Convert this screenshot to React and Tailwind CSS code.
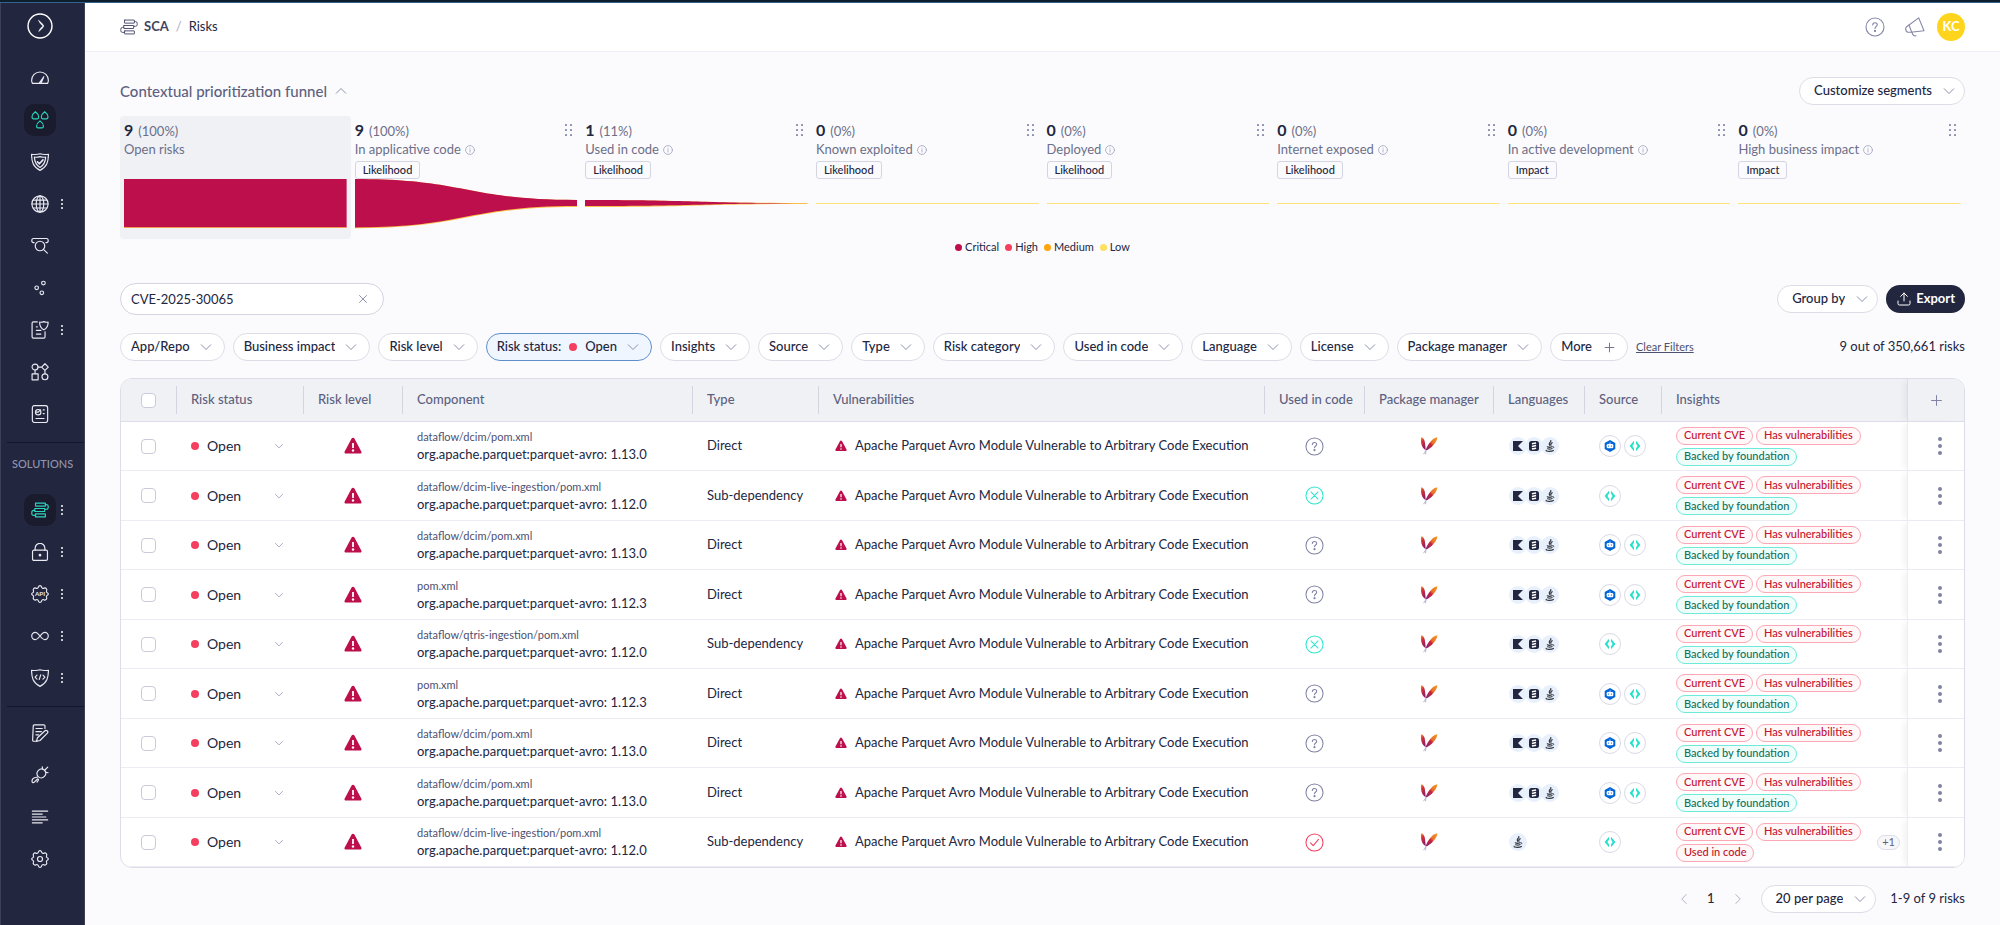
import { useState } from 'react';
import { ChevronLeft, ChevronRight, Plus, X, Upload } from 'lucide-react';

const SEGMENTS = [
  { count: 9, percent: '100%', label: 'Open risks', active: true },
  { count: 9, percent: '100%', label: 'In applicative code', tag: 'Likelihood' },
  { count: 1, percent: '11%', label: 'Used in code', tag: 'Likelihood' },
  { count: 0, percent: '0%', label: 'Known exploited', tag: 'Likelihood' },
  { count: 0, percent: '0%', label: 'Deployed', tag: 'Likelihood' },
  { count: 0, percent: '0%', label: 'Internet exposed', tag: 'Likelihood' },
  { count: 0, percent: '0%', label: 'In active development', tag: 'Impact' },
  { count: 0, percent: '0%', label: 'High business impact', tag: 'Impact' },
];

const LEGEND = [
  { label: 'Critical', color: 'bg-[#bc0f4b]' },
  { label: 'High', color: 'bg-[#f43f5e]' },
  { label: 'Medium', color: 'bg-[#fda50f]' },
  { label: 'Low', color: 'bg-[#fde05e]' },
];

const FILTERS_BEFORE = ['App/Repo', 'Business impact', 'Risk level'];
const FILTERS_AFTER = [
  'Insights',
  'Source',
  'Type',
  'Risk category',
  'Used in code',
  'Language',
  'License',
  'Package manager',
];

const COLUMNS = [
  { label: 'Risk status', width: 'w-[127px]' },
  { label: 'Risk level', width: 'w-[99px]' },
  { label: 'Component', width: 'w-[290px]' },
  { label: 'Type', width: 'w-[126px]' },
  { label: 'Vulnerabilities', width: 'w-[446px]' },
  { label: 'Used in code', width: 'w-[100px]' },
  { label: 'Package manager', width: 'w-[129px]' },
  { label: 'Languages', width: 'w-[91px]' },
  { label: 'Source', width: 'w-[77px]' },
  { label: 'Insights', width: '' },
];

const VULNERABILITY = 'Apache Parquet Avro Module Vulnerable to Arbitrary Code Execution';
const BASE_INSIGHTS = ['Current CVE', 'Has vulnerabilities', 'Backed by foundation'];

const direct = (path, version) => ({
  path,
  version,
  type: 'Direct',
  used: 'unknown',
  languages: ['kotlin', 'scala', 'java'],
  sources: ['bot', 'code'],
  insights: BASE_INSIGHTS,
});

const subDependency = (path, version) => ({
  ...direct(path, version),
  type: 'Sub-dependency',
  used: 'no',
  sources: ['code'],
});

const RISKS = [
  direct('dataflow/dcim/pom.xml', '1.13.0'),
  subDependency('dataflow/dcim-live-ingestion/pom.xml', '1.12.0'),
  direct('dataflow/dcim/pom.xml', '1.13.0'),
  direct('pom.xml', '1.12.3'),
  subDependency('dataflow/qtris-ingestion/pom.xml', '1.12.0'),
  direct('pom.xml', '1.12.3'),
  direct('dataflow/dcim/pom.xml', '1.13.0'),
  direct('dataflow/dcim/pom.xml', '1.13.0'),
  {
    ...subDependency('dataflow/dcim-live-ingestion/pom.xml', '1.12.0'),
    used: 'yes',
    languages: ['java'],
    insights: ['Current CVE', 'Has vulnerabilities', 'Used in code'],
    more: 1,
  },
];

function Icon({ size = 20, className = '', strokeWidth = 1.2, children }) {
  return (
    <svg
      width={size}
      height={size}
      viewBox="0 0 20 20"
      fill="none"
      stroke="currentColor"
      strokeWidth={strokeWidth}
      strokeLinecap="round"
      strokeLinejoin="round"
      className={`shrink-0 ${className}`}
      aria-hidden="true"
    >
      {children}
    </svg>
  );
}

const Chevron = ({ className = '' }) => (
  <svg width="12" height="8" viewBox="0 0 12 8" fill="none" stroke="currentColor" className={`shrink-0 ${className}`} aria-hidden="true">
    <path d="M1 1.5l5 5 5-5" />
  </svg>
);

const StackShape = () => (
  <>
    <rect x="5" y="2.300" width="11" height="3.400" rx=".3" />
    <rect x="4.200" y="8.300" width="11" height="3.400" rx=".3" />
    <rect x="5" y="14.300" width="11" height="3.400" rx=".3" />
    <path d="M16 4h1.200a1.900 1.900 0 011.900 2v1.200a1.900 1.900 0 01-1.900 2h-2M4.200 10.500H2.800a1.900 1.900 0 00-1.900 2v1.500a1.900 1.900 0 001.900 2H5" />
  </>
);

const GaugeShape = () => (
  <path d="M1.6 16c-.6-1-.9-2.200-.9-3.400a9.300 9.300 0 0118.600 0c0 1.200-.3 2.400-.9 3.400zM9.200 15.600l5-7M9.200 15.600a1.500 1.500 0 002 0l3-7" />
);

const DropsShape = () => (
  <>
    <path d="M4.800 .8c2 1.500 3.700 3.700 3.700 5.700 0 1.200-.6 2.200-1.400 2.200H2.500c-.8 0-1.400-1-1.400-2.200 0-2 1.700-4.200 3.700-5.700z" />
    <path d="M15.200 .8c2 1.500 3.700 3.700 3.700 5.700 0 1.200-.6 2.200-1.400 2.200h-4.600c-.8 0-1.400-1-1.400-2.200 0-2 1.700-4.200 3.700-5.700z" />
    <path d="M10 11c2 1.500 3.800 3.600 3.800 5.600 0 1.200-.6 2.200-1.400 2.200H7.600c-.8 0-1.400-1-1.400-2.200 0-2 1.800-4.100 3.800-5.600z" />
  </>
);

const ShieldCheckShape = () => (
  <>
    <path d="M10 .8c3 1.200 6 1 9.400.6-.1 8.300-1.500 13.600-9.400 17.900C2.100 15 .7 9.700.6 1.400 4 1.800 7 2 10 .8z" />
    <path d="M10 4c2.300.7 4.200.8 6.300.6-.3 5.200-1.600 8.600-6.300 11.500C5.300 13.200 4 9.800 3.700 4.600c2.100.2 4 .1 6.300-.6z" />
    <path d="M7.200 9.800l2.100 2.200 4-4.400" strokeWidth="1.800" />
  </>
);

const GlobeShape = () => (
  <>
    <circle cx="10" cy="10" r="9" />
    <ellipse cx="10" cy="10" rx="4.200" ry="9" />
    <path d="M10 1v18M1 10h18M2.300 5.600h15.400M2.300 14.400h15.400" />
  </>
);

const InspectShape = () => (
  <>
    <path d="M3.500 6.200H2.600a1.800 1.800 0 01-1.700-2.200c0-1.500.8-2.300 1.900-2.300h14.400c1.100 0 1.900.8 1.900 2.300a1.800 1.800 0 01-1.700 2.200h-.9" />
    <circle cx="10" cy="10" r="5.300" />
    <path d="M13.800 13.800l4.400 4.200" />
  </>
);

const DotsShape = () => (
  <>
    <circle cx="13.800" cy="4.500" r="2" />
    <circle cx="6.300" cy="9.800" r="2" />
    <circle cx="12" cy="15.300" r="2" />
  </>
);

const PolicyShape = () => (
  <>
    <path d="M7 1H2.600C1.700 1 1.200 1.500 1.200 2.400v15.200c0 .9.500 1.400 1.400 1.400h11.600c.9 0 1.400-.5 1.400-1.400V12" />
    <path d="M14.300.7c1.700.7 3 .8 4.700.6.100 4-1 6.600-4.700 8.500-3.700-1.900-4.800-4.500-4.700-8.500 1.700.2 3 .1 4.700-.6z" />
    <path d="M6 6.500h1M6 10.500h5M6 14.500h5" />
  </>
);

const ShapesShape = () => (
  <>
    <circle cx="4.500" cy="4.500" r="3.300" />
    <path d="M15.500.8l3.700 3.700-3.700 3.700-3.700-3.700zM7.800 4.500h4M4.500 7.800v4M15.500 8.200v3.500" />
    <rect x="1.200" y="12" width="6.700" height="6.700" />
    <circle cx="15.500" cy="15.300" r="3.300" />
  </>
);

const ReportShape = () => (
  <>
    <rect x="1.500" y=".6" width="17" height="18.800" rx="2.500" />
    <circle cx="8" cy="8" r="3" />
    <path d="M8 8l2.500-2.500M8 8H5M13.500 5.500h1.200M13.500 9.500h1.200M5.500 15h9" />
  </>
);

const LockShape = () => (
  <>
    <rect x="1.700" y="8" width="16.600" height="11.300" rx="1.500" />
    <path d="M4.600 8V5.800a5.400 5.400 0 0110.800 0V8" />
    <circle cx="10" cy="13.500" r=".9" fill="currentColor" />
  </>
);

const COG_PATH =
  'M8.300 2.200c.5-2 2.900-2 3.400 0 .3 1.300 1.700 2 2.900 1.300 1.900-.8 3.600 1 2.700 2.800-.5 1.200-.3 1.900.8 2.400 1.500.6 1.500 2 0 2.600-1.100.5-1.300 1.200-.8 2.400.9 1.800-.8 3.600-2.700 2.800-1.200-.7-2.600 0-2.900 1.300-.5 2-2.900 2-3.400 0-.3-1.300-1.700-2-2.900-1.300-1.900.8-3.600-1-2.700-2.800.5-1.200.3-1.900-.8-2.400-1.500-.6-1.500-2 0-2.600 1.100-.5 1.300-1.200.8-2.400-.9-1.800.8-3.600 2.700-2.800 1.200.7 2.600 0 2.900-1.300z';

const ApiShape = () => (
  <>
    <path d={COG_PATH} />
    <text
      x="10"
      y="12.600"
      textAnchor="middle"
      fontSize="7"
      fontWeight="700"
      fill="currentColor"
      stroke="none"
    >
      API
    </text>
  </>
);

const InfinityShape = () => (
  <path d="M10 10C8 7.500 6.800 6 4.800 6a4 4 0 000 8c2 0 3.200-1.500 5.200-4s3.200-4 5.200-4a4 4 0 010 8c-2 0-3.200-1.500-5.200-4z" />
);

const ShieldCodeShape = () => (
  <>
    <path d="M10 .8c3 1.200 6 1 9.400.6-.1 8.300-1.500 13.600-9.400 17.900C2.100 15 .7 9.700.6 1.400 4 1.800 7 2 10 .8z" />
    <path d="M6.700 6.800L4.500 9l2.200 2.200M13.300 6.800L15.500 9l-2.200 2.200M10.800 6.500l-1.600 5" />
  </>
);

const NoteShape = () => (
  <>
    <path d="M15.500 5V2.200C15.500 1.500 15 1 14.300 1H3.700c-.8 0-1.200.5-1.200 1.200L1.800 18c0 .7.400 1.200 1.200 1.200h2.500" />
    <path d="M5.500 5h7M5.500 8.500h6M5.500 12h3" />
    <path d="M15.200 7.800a1.800 1.800 0 013 2.400L10 18.300l-4 1 1.200-4z" />
  </>
);

const PlugShape = () => (
  <>
    <path d="M8.200 4.800c2.200-2 5-1.900 6.800-.1s1.900 4.600-.1 6.900c-2 2-5 2-6.900.2s-2-4.900.2-7z" />
    <path d="M13 3.500L12.500 1M16.400 7l2.600.5M15.200 4.700L18.600 1.200" />
    <path d="M7.500 12.200l-3.500.8c-1.800.4-2.900 2-2.900 4 0 1.600 1.600 2 2.600 1l3.200-3.300c.8-.7 1.900.2 1.200 1.200l-1.500 2" />
  </>
);

const LinesShape = () => <path d="M1.500 3.500h17M1.500 6.800h11M1.500 10h15M1.500 13.200h17M1.500 16.500h11" />;

const CogShape = () => (
  <>
    <path d={COG_PATH} />
    <circle cx="10" cy="10" r="2.800" />
  </>
);

const NAV_MAIN = [
  { label: 'Overview', Shape: GaugeShape },
  { label: 'Risks', Shape: DropsShape, active: true },
  { label: 'Governance', Shape: ShieldCheckShape },
  { label: 'Inventory', Shape: GlobeShape, menu: true },
  { label: 'Explorer', Shape: InspectShape },
  { label: 'Graph', Shape: DotsShape },
  { label: 'Policies', Shape: PolicyShape, menu: true },
  { label: 'Workflows', Shape: ShapesShape },
  { label: 'Reports', Shape: ReportShape },
];

const NAV_SOLUTIONS = [
  { label: 'SCA', Shape: StackShape, active: true, menu: true },
  { label: 'Secrets', Shape: LockShape, menu: true },
  { label: 'API security', Shape: ApiShape, menu: true },
  { label: 'Pipeline', Shape: InfinityShape, menu: true },
  { label: 'SAST', Shape: ShieldCodeShape, menu: true },
];

const NAV_FOOTER = [
  { label: 'Notes', Shape: NoteShape },
  { label: 'Connectors', Shape: PlugShape },
  { label: 'Audit log', Shape: LinesShape },
  { label: 'Settings', Shape: CogShape },
];

function NavList({ items }) {
  return (
    <ul className="pl-[23px]">
      {items.map(({ label, Shape, active, menu }) => (
        <li key={label} className="flex h-[42px] items-center gap-1">
          <a
            href="#"
            aria-label={label}
            className={`flex size-8 items-center justify-center rounded-[10px] ${active ? 'bg-[#1a1b2d] text-[#2ed3bd]' : 'text-[#e9eaf2]'}`}
          >
            <Icon size={18} strokeWidth={1.300}>
              <Shape />
            </Icon>
          </a>
          {menu && (
            <button type="button" aria-label={`${label} menu`} className="flex flex-col gap-[2px] px-px text-white">
              <span className="size-[2px] rounded-full bg-current" />
              <span className="size-[2px] rounded-full bg-current" />
              <span className="size-[2px] rounded-full bg-current" />
            </button>
          )}
        </li>
      ))}
    </ul>
  );
}

function Sidebar() {
  return (
    <nav className="w-[85px] shrink-0 border-x border-x-[#3b3f58] bg-[#22263f]">
      <a href="#" aria-label="Home" className="flex h-[54px] items-start pt-[10px] pl-[26px] text-white">
        <Icon size={26} strokeWidth={1.100}>
          <circle cx="10" cy="10" r="9.200" />
          <path d="M9 5.800c.8 1.800 1.700 3.100 3.300 4.200-1.600 1.100-2.500 2.400-3.300 4.200 1.200-.8 3-2.500 4-4.200-1-1.700-2.800-3.400-4-4.200z" fill="currentColor" strokeWidth=".4" />
        </Icon>
      </a>
      <NavList items={NAV_MAIN} />
      <div className="mt-[7px] ml-1.5 border-t border-[#14172a]" />
      <p className="py-[13px] pl-[11px] text-[11px] leading-4 font-medium text-[#9295ae]">SOLUTIONS</p>
      <div className="mt-1">
        <NavList items={NAV_SOLUTIONS} />
      </div>
      <div className="mt-[7px] mb-[5px] ml-1.5 border-t border-[#14172a]" />
      <NavList items={NAV_FOOTER} />
    </nav>
  );
}

const HelpCircle = ({ size, className }) => (
  <Icon size={size} className={className} strokeWidth={1.100}>
    <circle cx="10" cy="10" r="9" />
    <path d="M7.700 8c0-1.400 1-2.300 2.300-2.300s2.300.9 2.300 2.100c0 1.600-2.300 1.800-2.300 3.600" />
    <circle cx="10" cy="13.900" r=".6" fill="currentColor" />
  </Icon>
);

function Header() {
  return (
    <header className="flex h-[49px] items-center justify-between border-b border-[#efeff5] bg-white px-[35px]">
      <div className="flex items-center">
        <Icon size={18} strokeWidth={1.100} className="mr-[6px] text-[#4d5070]">
          <StackShape />
        </Icon>
        <a href="#" className="font-bold text-[#40435e]">SCA</a>
        <span className="mx-[7px] text-[#a9abbf]">/</span>
        <span>Risks</span>
      </div>
      <div className="flex items-center text-[#8588a8]">
        <button type="button" aria-label="Help" className="mr-5">
          <HelpCircle size={20} />
        </button>
        <button type="button" aria-label="Announcements" className="mr-3">
          <Icon size={20} strokeWidth={1.100}>
            <path d="M13.700 .9l5.300 12.900-13.300 1.500H2.600C.7 13.900.3 11.700 1.300 10z" />
            <path d="M4 7.900l2.700 7.300M7 15.300c.5 2.600 1.900 3.700 4 3.500" />
          </Icon>
        </button>
        <span className="flex size-7 items-center justify-center rounded-full bg-[#fed51c] text-[13px] font-bold text-white">KC</span>
      </div>
    </header>
  );
}

// Filter pills keep more room after the chevron than the menu pills.
function PillSelect({ label, className = '', menu = false }) {
  return (
    <div className={`relative flex h-7 items-center rounded-full border border-[#dcdde8] bg-white ${className}`}>
      <select
        aria-label={label}
        className={`field-sizing-content h-full appearance-none rounded-full bg-transparent font-medium outline-none ${menu ? 'pr-[32px] pl-[14px]' : 'pr-[34px] pl-[10px]'}`}
      >
        <option>{label}</option>
      </select>
      <Chevron className={`pointer-events-none absolute text-[#8d90ae] ${menu ? 'right-[9px]' : 'right-[12px]'}`} />
    </div>
  );
}

function FunnelShape({ index }) {
  const common = { viewBox: '0 0 224 50', preserveAspectRatio: 'none', className: 'block h-[50px] w-full', 'aria-hidden': true };
  if (index === 0) {
    return (
      <svg {...common}>
        <rect width="224" height="48.500" fill="#bc0f4b" />
        <rect y="48.200" width="224" height=".8" fill="#f9a03f" />
      </svg>
    );
  }
  if (index === 1) {
    return (
      <svg {...common}>
        <path d="M0 0C112 0 112 21 224 21V28C112 28 112 49.200 0 49.200z" fill="#fcc04a" />
        <path d="M0 0C112 0 112 21 224 21V27C112 27 112 48.400 0 48.400z" fill="#bc0f4b" />
      </svg>
    );
  }
  if (index === 2) {
    return (
      <svg {...common}>
        <path d="M0 21C112 21 112 24 224 24V25C112 25 112 28 0 28z" fill="#fcc04a" />
        <path d="M0 21C112 21 112 24.200 224 24.200C112 24.600 112 27 0 27z" fill="#bc0f4b" />
      </svg>
    );
  }
  return (
    <svg {...common}>
      <rect y="24" width="224" height="1" fill="#fde37a" />
    </svg>
  );
}

function Funnel() {
  return (
    <section>
      <div className="flex h-7 items-center justify-between">
        <h2 className="flex items-center gap-2 text-[15px] font-medium text-[#5d617f]">
          Contextual prioritization funnel
          <button type="button" aria-label="Collapse funnel">
            <Chevron className="rotate-180 text-[#8d90ae]" />
          </button>
        </h2>
        <PillSelect label="Customize segments" menu />
      </div>

      <div className="mt-[11px] grid grid-cols-8">
        {SEGMENTS.map((segment, index) => (
          <div
            key={segment.label}
            className={`h-[123px] rounded px-1 pt-1 ${segment.active ? 'bg-[#f0f1f5]' : ''}`}
          >
            <div className="flex h-5 items-center justify-between">
              <p className="flex items-baseline gap-[5px]">
                <span className="text-base font-bold">{segment.count}</span>
                <span className="text-[13px] text-[#6c6f89]">({segment.percent})</span>
              </p>
              {!segment.active && (
                <button type="button" aria-label={`Move ${segment.label}`} className="mr-1 text-[#8d90ae]">
                  <svg width="8" height="14" viewBox="0 0 8 14" fill="currentColor" aria-hidden="true">
                    {[1, 6, 11].map(y => (
                      <g key={y}>
                        <rect x="0" y={y} width="2" height="2" rx=".5" />
                        <rect x="5" y={y} width="2" height="2" rx=".5" />
                      </g>
                    ))}
                  </svg>
                </button>
              )}
            </div>
            <p className="flex h-5 items-center gap-1 text-[13px] text-[#6c6f89]">
              {segment.label}
              {!segment.active && (
                <Icon size={10} strokeWidth={1.800} className="text-[#a9abc4]">
                  <circle cx="10" cy="10" r="8.800" />
                  <path d="M10 9v5M10 6v.200" />
                </Icon>
              )}
            </p>
            <div className="mt-px h-[18px]">
              {segment.tag && (
                <span className="inline-flex h-[18px] items-center rounded-[3px] border border-[#d3d5e2] px-[7px] align-top text-[11px] font-medium">
                  {segment.tag}
                </span>
              )}
            </div>
            <FunnelShape index={index} />
          </div>
        ))}
      </div>

      <ul className="flex h-4 justify-center gap-[6px] text-[11px] leading-4">
        {LEGEND.map(item => (
          <li key={item.label} className="flex items-center gap-[3px]">
            <span className={`size-[7px] rounded-full ${item.color}`} />
            {item.label}
          </li>
        ))}
      </ul>
    </section>
  );
}

function Filters() {
  const [search, setSearch] = useState('CVE-2025-30065');

  return (
    <section className="mt-7">
      <div className="flex items-center justify-between">
        <div className="relative">
          <input
            type="text"
            aria-label="Search risks"
            value={search}
            onChange={(e) => setSearch(e.target.value)}
            className="block h-8 w-[264px] rounded-full border border-[#d3d5e2] bg-white pr-9 pl-[10px] outline-none"
          />
          <button
            type="button"
            aria-label="Clear search"
            onClick={() => setSearch('')}
            className="absolute top-[9px] right-[14px] text-[#8d90ae]"
          >
            <X size={14} strokeWidth={1.700} />
          </button>
        </div>
        <div className="flex items-center gap-2">
          <PillSelect label="Group by" menu />
          <button type="button" className="flex h-7 items-center gap-1 rounded-full bg-[#22263f] px-[10px] font-bold text-white">
            <Upload size={16} strokeWidth={1.500} />
            Export
          </button>
        </div>
      </div>

      <div className="mt-[18px] flex items-center gap-2">
        {FILTERS_BEFORE.map(label => <PillSelect key={label} label={label} />)}
        <label className="relative flex h-7 items-center rounded-full border border-[#5f8fcb] bg-[#f0f6ff] pl-[10px] font-medium">
          Risk status:
          <span className="mx-2 size-2 rounded-full bg-[#f43f5e]" />
          <select className="field-sizing-content appearance-none bg-transparent pr-[34px] outline-none">
            <option>Open</option>
          </select>
          <Chevron className="pointer-events-none absolute right-[12px] text-[#8d90ae]" />
        </label>
        {FILTERS_AFTER.map(label => <PillSelect key={label} label={label} />)}
        <button type="button" className="flex h-7 items-center gap-[10px] rounded-full border border-[#dcdde8] bg-white px-[10px] font-medium">
          More
          <Plus size={15} strokeWidth={1.500} className="text-[#6c6f89]" />
        </button>
        <a href="#" className="text-[11px] text-[#4d5070] underline">Clear Filters</a>
        <p className="ml-auto">9 out of 350,661 risks</p>
      </div>
    </section>
  );
}

const Warning = ({ size }) => (
  <svg width={size} height={size} viewBox="0 0 18 18" aria-hidden="true" className="shrink-0">
    <path d="M7.600 1.600a1.600 1.600 0 012.800 0l6.900 12.800a1.400 1.400 0 01-1.300 2.200H2a1.400 1.400 0 01-1.300-2.200z" fill="#bc0f4b" />
    <path d="M9 6v5" stroke="#fff" strokeWidth="1.800" />
    <circle cx="9" cy="13.500" r="1.200" fill="#fff" />
  </svg>
);

function UsedIcon({ used }) {
  if (used === 'unknown') return <HelpCircle size={19} className="text-[#8083a3]" />;
  if (used === 'no') {
    return (
      <Icon size={19} strokeWidth={1.100} className="text-[#2ee6cf]">
        <circle cx="10" cy="10" r="9" />
        <path d="M6.300 6.300l7.400 7.400M13.700 6.300l-7.400 7.400" />
      </Icon>
    );
  }
  return (
    <Icon size={19} strokeWidth={1.100} className="text-[#f43f5e]">
      <circle cx="10" cy="10" r="9" />
      <path d="M5.800 10.300l2.900 3 5.500-6.500" />
    </Icon>
  );
}

const MavenIcon = () => (
  <svg width="18" height="20" viewBox="0 0 18 20" aria-hidden="true">
    <defs>
      <linearGradient id="feather-right" x1="1" y1="0" x2="0" y2="1">
        <stop offset="0" stopColor="#f69923" />
        <stop offset=".42" stopColor="#e8702a" />
        <stop offset=".55" stopColor="#c8203c" />
        <stop offset="1" stopColor="#7e2a7c" />
      </linearGradient>
      <linearGradient id="feather-left" x1="0" y1="0" x2=".4" y2="1">
        <stop offset="0" stopColor="#f69923" />
        <stop offset=".4" stopColor="#d3303a" />
        <stop offset="1" stopColor="#8a1f66" />
      </linearGradient>
    </defs>
    <path d="M1.300 1.200C3 1.500 4.300 3.200 4.800 5.800c.5 2.900.8 5.700.9 8.400C3 12.700 1.300 9.600 1 5.700.8 4 .9 2.400 1.300 1.200z" fill="url(#feather-left)" />
    <path d="M17.300 1.200c.1 2.300-1.200 4.700-3.700 7.500-2.300 2.600-4.800 5-8 5.900C6.300 11.500 8.200 8.400 10.700 5.500 12.800 3 15 1.500 17.300 1.200z" fill="url(#feather-right)" />
    <path d="M6 14.500l-2.500 3.700M6 14.500l-.5 3.800" stroke="#a9a2c4" strokeWidth=".8" fill="none" />
  </svg>
);

function LanguageIcon({ name }) {
  return (
    <span className="-mr-0.5 flex size-[18px] items-center justify-center rounded-full bg-[#e8f0fb]">
      <svg width="12" height="12" viewBox="0 0 12 12" aria-hidden="true">
        {name === 'kotlin' && <path d="M1 1h10L6 6l5 5H1z" fill="#22263f" />}
        {name === 'scala' && (
          <>
            <rect x="1" y="1" width="10" height="10" rx="2.500" fill="#22263f" />
            <path d="M3.900 3.700l4.200-.8M3.900 6.400l4.200-.8M3.900 9.100l4.200-.8" stroke="#fff" strokeWidth="1.500" />
          </>
        )}
        {name === 'java' && (
          <g fill="none" stroke="#33363f" strokeWidth="1.200" strokeLinecap="round">
            <path d="M6.800 .6C7.300 2.200 4.800 2.700 5.300 4.300c.2.600.7.900.6 1.400M8.300 2.800c-1.500.7-1.800 1.300-1.200 2.200M3.300 6.800c1 .5 3.600.4 4.700 0M3.700 8.700c1 .4 3 .4 4 0M2.200 10.300c-.5 1.300 5.600 1.300 7.200.2" />
            <path d="M8.700 6.600c1.300-.4 1.700 1 .2 1.700" strokeWidth=".9" />
          </g>
        )}
      </svg>
    </span>
  );
}

function SourceIcon({ name }) {
  return (
    <span className="flex size-[22px] items-center justify-center rounded-full border border-[#d9dae5] bg-white">
      <svg width="12" height="12" viewBox="0 0 12 12" aria-hidden="true">
        {name === 'bot' ? (
          <>
            <path d="M6 0l5.300 3v6L6 12 .7 9V3z" fill="#0366d6" />
            <path d="M6 2.400v1.800" stroke="#fff" strokeWidth=".8" />
            <rect x="2.700" y="4" width="6.600" height="4.300" rx="1.200" fill="#fff" />
            <path d="M4.600 5.500v1.200M7.400 5.500v1.200" stroke="#0366d6" strokeWidth=".9" />
          </>
        ) : (
          <path d="M5 .8L.6 6 5 11.200V8.600L3.400 6 5 3.400zM7 .8L11.400 6 7 11.200V8.600L8.600 6 7 3.400z" fill="#25e0cb" />
        )}
      </svg>
    </span>
  );
}

function InsightBadge({ label }) {
  const tone = label === 'Backed by foundation'
    ? 'border-[#6fe9d9] bg-[#f0fefb] text-[#11735f]'
    : 'border-[#fba7b5] bg-[#fff8f9] text-[#c4122f]';
  return (
    <span className={`flex h-[18px] items-center rounded-full border px-[7px] text-[11px] font-medium ${tone}`}>
      {label}
    </span>
  );
}

const Checkbox = ({ label }) => (
  <input
    type="checkbox"
    aria-label={label}
    className="block size-[15px] appearance-none rounded-[4px] border border-[#c9cbdc] bg-white checked:bg-[#22263f]"
  />
);

function RiskRow({ risk }) {
  const cell = 'border-b border-[#ececf2] py-0 pr-0 pl-[15px]';
  return (
    <tr className="h-[49px] even:h-[50px]">
      <td className="border-b border-[#ececf2] pl-5"><Checkbox label="Select risk" /></td>
      <td className={cell}>
        <label className="relative flex items-center">
          <span className="mr-2 size-2 shrink-0 rounded-full bg-[#f43f5e]" />
          <select aria-label="Risk status" className="w-[77px] appearance-none bg-transparent text-sm outline-none">
            <option>Open</option>
          </select>
          <Chevron className="pointer-events-none absolute right-[18px] scale-75 text-[#8d90ae]" />
        </label>
      </td>
      <td className="border-b border-[#ececf2]"><div className="flex justify-center"><Warning size={18} /></div></td>
      <td className={cell}>
        <p className="text-[11px] leading-4 text-[#4d5070]">{risk.path}</p>
        <p className="leading-[18px]">org.apache.parquet:parquet-avro: {risk.version}</p>
      </td>
      <td className={cell}>{risk.type}</td>
      <td className={cell}>
        <span className="flex items-center gap-2 pl-0.5 whitespace-nowrap">
          <Warning size={12} />
          {VULNERABILITY}
        </span>
      </td>
      <td className="border-b border-[#ececf2]"><div className="flex justify-center"><UsedIcon used={risk.used} /></div></td>
      <td className="border-b border-[#ececf2]"><div className="flex justify-center"><MavenIcon /></div></td>
      <td className="border-b border-[#ececf2] pl-4">
        <div className="flex">{risk.languages.map(name => <LanguageIcon key={name} name={name} />)}</div>
      </td>
      <td className={cell}>
        <div className="flex gap-[3px]">{risk.sources.map(name => <SourceIcon key={name} name={name} />)}</div>
      </td>
      <td className={cell}>
        <div className="flex items-center justify-between pr-[7px]">
          <div className="flex w-[195px] flex-wrap gap-x-[3px] gap-y-[3px]">
            {risk.insights.map(label => <InsightBadge key={label} label={label} />)}
          </div>
          {risk.more && (
            <span className="flex h-[15px] items-center rounded-full border border-[#dcdde8] bg-[#f7f7fa] px-1 text-[11px] text-[#5d617f]">
              +{risk.more}
            </span>
          )}
        </div>
      </td>
      <td className="border-b border-l border-[#ececf2] bg-white shadow-[-6px_0_6px_-3px_rgba(34,38,63,0.06)]">
        <button type="button" aria-label="Row actions" className="mx-auto flex flex-col gap-[3px] px-1 pl-3">
          <span className="size-1 rounded-full bg-[#8083a3]" />
          <span className="size-1 rounded-full bg-[#8083a3]" />
          <span className="size-1 rounded-full bg-[#8083a3]" />
        </button>
      </td>
    </tr>
  );
}

function RisksTable() {
  return (
    <div className="mt-[17px] overflow-hidden rounded-xl border border-[#dcdde8] bg-white">
      <table className="w-full table-fixed border-separate border-spacing-0 text-left">
        <thead className="bg-[#f0f1f5] text-[#5d617f]">
          <tr className="h-[43px]">
            <th className="w-[55px] border-b border-[#dcdde8] pl-5"><Checkbox label="Select all risks" /></th>
            {COLUMNS.map(column => (
              <th key={column.label} className={`border-b border-[#dcdde8] font-medium ${column.width}`}>
                <span className="flex h-7 items-center border-l border-[#d3d5e2] pl-[14px] whitespace-nowrap">{column.label}</span>
              </th>
            ))}
            <th className="w-[57px] border-b border-l border-[#dcdde8] shadow-[-6px_0_6px_-3px_rgba(34,38,63,0.06)]">
              <button type="button" aria-label="Add column" className="mx-auto block">
                <Plus size={17} strokeWidth={1.400} className="text-[#8083a3]" />
              </button>
            </th>
          </tr>
        </thead>
        <tbody>
          {RISKS.map((risk, index) => <RiskRow key={index} risk={risk} />)}
        </tbody>
      </table>
    </div>
  );
}

function Pagination() {
  return (
    <div className="mt-[17px] flex h-7 items-center justify-end">
      <button type="button" aria-label="Previous page" className="text-[#a9abc4]">
        <ChevronLeft size={18} strokeWidth={1.200} />
      </button>
      <span className="mx-[14px] font-medium">1</span>
      <button type="button" aria-label="Next page" className="mr-[14px] text-[#a9abc4]">
        <ChevronRight size={18} strokeWidth={1.200} />
      </button>
      <PillSelect label="20 per page" className="mr-[14px]" menu />
      <span>1-9 of 9 risks</span>
    </div>
  );
}

export default function App() {
  return (
    <div className="flex min-h-screen flex-col bg-[#fbfbfd] font-['Lato',sans-serif] text-[13px] text-[#22263f]">
      <div className="h-[3px] border-b border-[#34638c] bg-[#0d1f2e]" />
      <div className="flex flex-1">
        <Sidebar />
        <div className="min-w-0 flex-1">
          <Header />
          <main className="px-[35px] pt-[25px]">
            <Funnel />
            <Filters />
            <RisksTable />
            <Pagination />
          </main>
        </div>
      </div>
    </div>
  );
}
